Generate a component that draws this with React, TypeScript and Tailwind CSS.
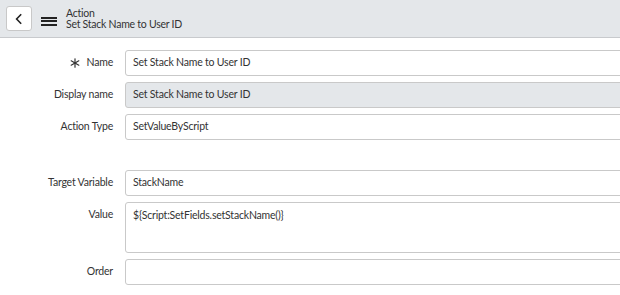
import React from 'react';

const Asterisk = () => (
  <svg width="10" height="10" viewBox="0 0 10 10" className="mr-[7px]">
    <g stroke="#333" strokeWidth="1.2" strokeLinecap="round">
      <line x1="5" y1="0.8" x2="5" y2="9.2" />
      <line x1="1.2" y1="2.8" x2="8.8" y2="7.2" />
      <line x1="1.2" y1="7.2" x2="8.8" y2="2.8" />
    </g>
  </svg>
);

const Field: React.FC<{
  label: string;
  value?: string;
  required?: boolean;
  readOnly?: boolean;
  tall?: boolean;
}> = ({ label, value, required, readOnly, tall }) => (
  <div className={`flex ${tall ? 'items-start' : 'items-center'}`}>
    <div
      className={`w-[113px] shrink-0 flex justify-end items-center text-[10.5px] tracking-[-0.2px] text-[#333] ${
        tall ? 'pt-[5px]' : ''
      }`}
    >
      {required && <Asterisk />}
      {label}
    </div>
    <div
      className={`ml-[12px] w-[510px] shrink-0 border border-[#c9c9c9] rounded-[3px] px-[7px] text-[10.5px] tracking-[-0.2px] text-[#333] ${
        tall ? 'h-[51px] pt-[5px]' : 'h-[26px] flex items-center'
      } ${readOnly ? 'bg-[#e4e7ea]' : 'bg-white'}`}
    >
      {value}
    </div>
  </div>
);

export default function App() {
  return (
    <div
      className="w-[620px] h-[295px] overflow-hidden bg-white"
      style={{ fontFamily: 'Lato, "Liberation Sans", sans-serif' }}
    >
      <div className="h-[38px] bg-[#e4e7ea] border-b border-[#c8cacd] flex items-center px-[6px]">
        <button className="w-[26px] h-[25px] bg-white border border-[#c8c8c8] rounded-[3px] flex items-center justify-center">
          <svg width="10" height="12" viewBox="0 0 10 12">
            <path d="M7.2 1.2 L2.6 6 L7.2 10.8" fill="none" stroke="#222" strokeWidth="1.6" />
          </svg>
        </button>
        <div className="ml-[9px] mt-[5px] w-[16px] flex flex-col gap-[1.5px]">
          <div className="h-[2px] bg-[#222]" />
          <div className="h-[2px] bg-[#222]" />
          <div className="h-[2px] bg-[#222]" />
        </div>
        <div className="ml-[9px] mt-[1px] text-[10.5px] tracking-[-0.25px] leading-[11px] text-[#333]">
          <div>Action</div>
          <div>Set Stack Name to User ID</div>
        </div>
      </div>

      <div className="pt-[12px] flex flex-col gap-[6px]">
        <Field label="Name" value="Set Stack Name to User ID" required />
        <Field label="Display name" value="Set Stack Name to User ID" readOnly />
        <Field label="Action Type" value="SetValueByScript" />
        <div className="h-[18px]" />
        <Field label="Target Variable" value="StackName" />
        <Field label="Value" value="${Script:SetFields.setStackName()}" tall />
        <Field label="Order" />
      </div>
    </div>
  );
}
